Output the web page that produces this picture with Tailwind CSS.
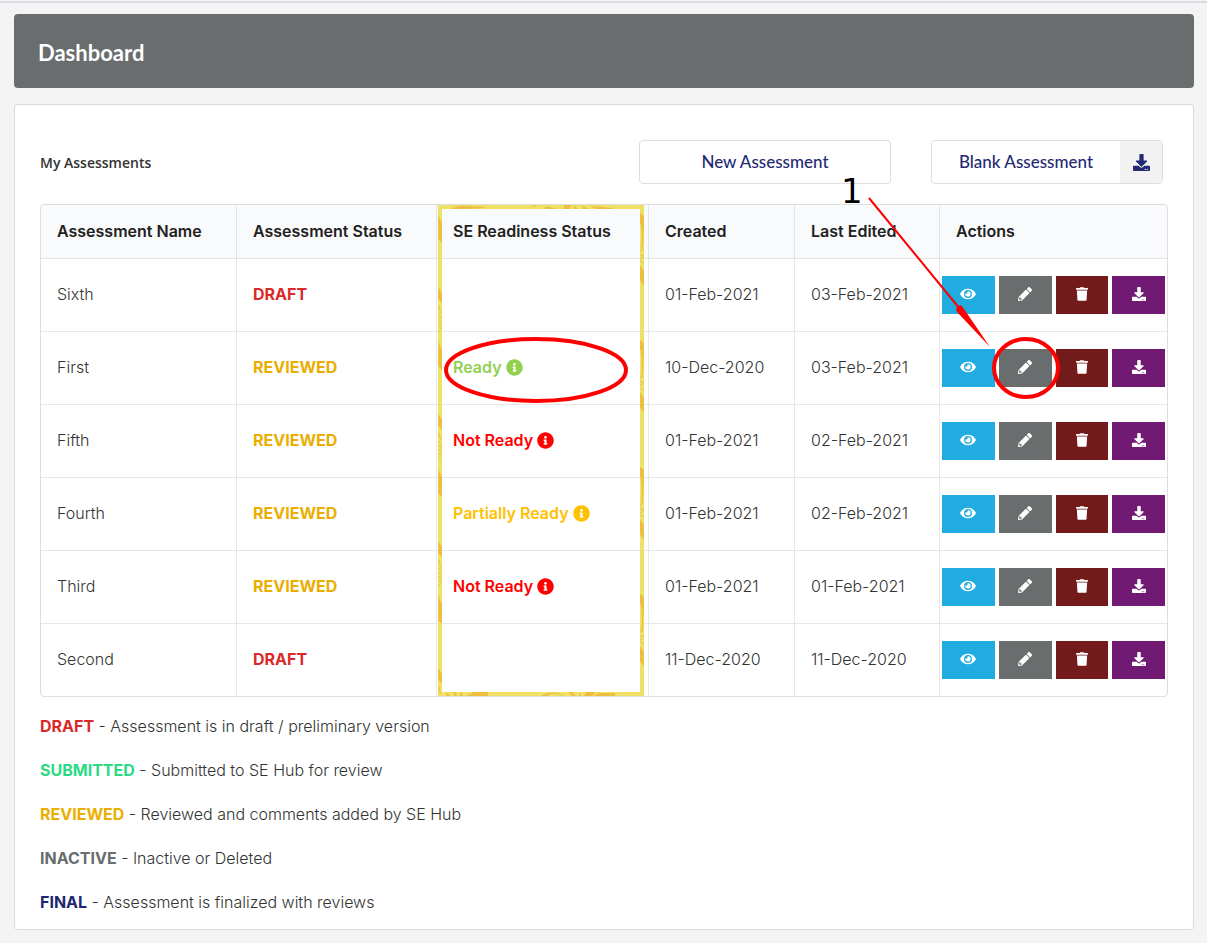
<!DOCTYPE html>
<html lang="en">
<head>
<meta charset="utf-8">
<meta name="viewport" content="width=device-width, initial-scale=1">
<title>Dashboard</title>
<script src="https://cdn.jsdelivr.net/npm/@tailwindcss/browser@4"></script>
</head>
<body class="relative bg-[#f4f4f4] font-['Inter',sans-serif] text-base text-[#333]">

<!-- Icon definitions -->
<svg class="hidden" aria-hidden="true">
  <symbol id="eye" viewBox="0 0 576 512"><path d="M572.52 241.4C518.29 135.59 410.93 64 288 64S57.68 135.64 3.48 241.41a32.35 32.35 0 0 0 0 29.19C57.71 376.41 165.07 448 288 448s230.32-71.64 284.52-177.41a32.35 32.35 0 0 0 0-29.19zM288 400a144 144 0 1 1 144-144 143.93 143.93 0 0 1-144 144zm0-240a95.31 95.31 0 0 0-25.31 3.79 47.85 47.85 0 0 1-66.9 66.9A95.78 95.78 0 1 0 288 160z"/></symbol>
  <symbol id="pencil" viewBox="0 0 512 512"><path d="M497.9 142.1l-46.1 46.1c-4.7 4.7-12.3 4.7-17 0l-111-111c-4.7-4.7-4.7-12.3 0-17l46.1-46.1c18.7-18.7 49.1-18.7 67.9 0l60.1 60.1c18.8 18.7 18.8 49.1 0 67.9zM284.2 99.8L21.6 362.4.4 483.9c-2.9 16.4 11.4 30.6 27.8 27.8l121.5-21.3 262.6-262.6c4.7-4.7 4.7-12.3 0-17l-111-111c-4.8-4.7-12.4-4.7-17.1 0zM88 424h48v36.3l-64.5 11.3-31.1-31.1L51.7 376H88v48z"/></symbol>
  <symbol id="trash" viewBox="0 0 448 512"><path d="M432 32H312l-9.4-18.7A24 24 0 0 0 281.1 0H166.8a23.72 23.72 0 0 0-21.4 13.3L136 32H16A16 16 0 0 0 0 48v32a16 16 0 0 0 16 16h416a16 16 0 0 0 16-16V48a16 16 0 0 0-16-16zM53.2 467a48 48 0 0 0 47.9 45h245.8a48 48 0 0 0 47.9-45L416 128H32z"/></symbol>
  <symbol id="download" viewBox="0 0 512 512"><path d="M216 0h80c13.3 0 24 10.7 24 24v168h87.7c17.8 0 26.7 21.5 14.1 34.1L269.7 378.3c-7.5 7.5-19.8 7.5-27.3 0L90.1 226.1c-12.6-12.6-3.7-34.1 14.1-34.1H192V24c0-13.3 10.7-24 24-24zm296 376v112c0 13.3-10.7 24-24 24H24c-13.3 0-24-10.7-24-24V376c0-13.3 10.7-24 24-24h146.7l49 49c20.1 20.1 52.5 20.1 72.6 0l49-49H488c13.3 0 24 10.7 24 24zm-124 88c0-11-9-20-20-20s-20 9-20 20 9 20 20 20 20-9 20-20zm64 0c0-11-9-20-20-20s-20 9-20 20 9 20 20 20 20-9 20-20z"/></symbol>
  <symbol id="info" viewBox="0 0 512 512"><path d="M256 8C119.043 8 8 119.083 8 256c0 136.997 111.043 248 248 248s248-111.003 248-248C504 119.083 392.957 8 256 8zm0 110c23.196 0 42 18.804 42 42s-18.804 42-42 42-42-18.804-42-42 18.804-42 42-42zm56 254c0 6.627-5.373 12-12 12h-88c-6.627 0-12-5.373-12-12v-24c0-6.627 5.373-12 12-12h12v-64h-12c-6.627 0-12-5.373-12-12v-24c0-6.627 5.373-12 12-12h64c6.627 0 12 5.373 12 12v100h12c6.627 0 12 5.373 12 12v24z"/></symbol>
</svg>

<div class="h-[3px] border-b-2 border-[#d8dbe2]"></div>
<div class="px-[14px] pt-[11px] pb-[13px] pr-[13px]">
  <header class="rounded bg-[#696d6d] px-6 pt-6 pb-5">
    <h1 class="font-['Lato',sans-serif] text-[22px] leading-[30px] font-bold text-white">Dashboard</h1>
  </header>

  <main class="mt-4 rounded border border-[#d8dbe2] bg-white px-[25px] pt-[35px] pb-[15px]">
    <div class="flex items-center gap-10 pr-[5px] font-['Lato',sans-serif] text-[17px] font-medium text-[#232a73]">
      <h2 class="mr-auto pt-0.5 font-['Open_Sans',sans-serif] text-sm font-semibold text-[#333]">My Assessments</h2>
      <button type="button" class="h-11 w-[252px] rounded border border-[#dedede]">New Assessment</button>
      <button type="button" class="flex h-11 w-[232px] items-stretch overflow-hidden rounded border border-[#dedede]">
        <span class="flex grow items-center justify-center">Blank Assessment</span>
        <span class="flex w-[42px] items-center justify-center bg-[#f2f2f2]"><svg class="size-[17px] fill-current"><use href="#download"/></svg></span>
      </button>
    </div>

    <div class="mt-5 overflow-hidden rounded border border-[#dedede]">
      <table class="w-full table-fixed border-separate border-spacing-0 text-left">
        <colgroup><col class="w-[196px]"><col class="w-[200px]"><col class="w-[212px]"><col class="w-[146px]"><col class="w-[145px]"><col></colgroup>
        <thead class="bg-[#f9fafb] text-[#212121]">
          <tr class="h-[54px] *:border-b *:border-[#e2e3e5] *:px-4 *:pb-0.5 *:font-semibold">
            <th class="border-r">Assessment Name</th><th class="border-r">Assessment Status</th><th class="border-r">SE Readiness Status</th><th class="border-r">Created</th><th class="border-r">Last Edited</th><th>Actions</th>
          </tr>
        </thead>
        <tbody id="rows" class="font-light"></tbody>
      </table>
    </div>

    <div class="mt-[17px] flex flex-col gap-5 font-light">
      <p><b class="font-bold text-[#db2828]">DRAFT</b> - Assessment is in draft / preliminary version</p>
      <p><b class="font-bold text-[#2bdb84]">SUBMITTED</b> - Submitted to SE Hub for review</p>
      <p><b class="font-bold text-[#eaae00]">REVIEWED</b> - Reviewed and comments added by SE Hub</p>
      <p><b class="font-bold text-[#696d6d]">INACTIVE</b> - Inactive or Deleted</p>
      <p><b class="font-bold text-[#1d2672]">FINAL</b> - Assessment is finalized with reviews</p>
    </div>
  </main>
</div>

<!-- Callouts drawn over the table -->
<svg class="pointer-events-none absolute top-0 left-0 h-[943px] w-[1207px]" viewBox="0 0 1207 943" fill="none">
  <defs>
    <pattern id="left" x="438" y="287" width="4" height="127" patternUnits="userSpaceOnUse">
      <rect width="4" height="127" fill="#efe066"/>
      <path d="M0 0 4 6V16L0 12ZM0 55 4 63V83L0 79ZM0 18Q2 20 3 26L2 26Q1 21 0 20Z" fill="#eebe3f"/>
      <path d="M0 27 4 31M0 31 4 34M0 36H4M0 40 4 38M0 45 4 41" stroke="#e9c548"/>
      <path d="M0 55H1V80H0" fill="#f0c544"/>
    </pattern>
    <pattern id="right" x="640" y="213" width="4" height="127" patternUnits="userSpaceOnUse">
      <rect width="4" height="127" fill="#efe066"/>
      <path d="M0 0 4 3V31Q4 12 0 10ZM0 52 4 58V73L0 67ZM2 12Q5 24 2 38H1Q3 24 1 12Z" fill="#eebe3f"/>
      <path d="M0 38 4 36M0 42H4M0 46 4 43M0 48 4 50" stroke="#e9c548"/>
    </pattern>
  </defs>
  <path d="M438 205H644V209H438ZM438 692H644V696H438Z" fill="#efe066"/>
  <g fill="#eebe3f">
    <path d="M452 209Q458 205 466 206L485 207V208L466 209ZM530 206 538 205 534 207ZM545 207Q550 206 556 209H545ZM563 209 565 205H572L569 209ZM574 209V205L578 209ZM582 205 588 209H583ZM590 206 613 208V209H596Z"/>
    <path d="M446 692 450 696H447ZM453 692 455 696H457L455 692ZM462 692 459 696H463ZM466 696 474 692H488V696ZM541 696Q552 689 565 696L560 695Q552 692 547 696ZM568 692 572 696H576L572 692ZM579 692V696H581ZM586 692 584 696H592L596 692ZM598 693H615V696H594Z"/>
  </g>
  <path d="M438 205H442V696H438Z" fill="url(#left)"/>
  <path d="M640 205H644V696H640Z" fill="url(#right)"/>
  <g stroke="#f00">
    <ellipse cx="536" cy="370" rx="90" ry="31" stroke-width="4"/>
    <ellipse cx="1026" cy="368" rx="32" ry="29" stroke-width="4"/>
    <path d="M869 198 960 309" stroke-width="2"/>
  </g>
  <path d="M956 310 957 307 961 305 964 309 990 347 958 313Z" fill="#f00"/>
  <text x="841" y="203" fill="#000" font-size="34" class="font-['DejaVu_Sans',sans-serif]">1</text>
</svg>

<script>
const statusClass = { DRAFT: 'text-[#db2828]', REVIEWED: 'text-[#eaae00]' };
const readyClass = { 'Ready': 'text-[#92d050]', 'Not Ready': 'text-[#ff0000]', 'Partially Ready': 'text-[#ffc000]' };
const actions = [
  ['View', 'eye', 'bg-[#20abe1]', 'w-4'],
  ['Edit', 'pencil', 'bg-[#696d6d]', 'w-3.5'],
  ['Delete', 'trash', 'bg-[#731a1a]', 'w-3'],
  ['Download', 'download', 'bg-[#701a73]', 'w-3.5'],
];
const rows = [
  ['Sixth', 'DRAFT', '', '01-Feb-2021', '03-Feb-2021'],
  ['First', 'REVIEWED', 'Ready', '10-Dec-2020', '03-Feb-2021'],
  ['Fifth', 'REVIEWED', 'Not Ready', '01-Feb-2021', '02-Feb-2021'],
  ['Fourth', 'REVIEWED', 'Partially Ready', '01-Feb-2021', '02-Feb-2021'],
  ['Third', 'REVIEWED', 'Not Ready', '01-Feb-2021', '01-Feb-2021'],
  ['Second', 'DRAFT', '', '11-Dec-2020', '11-Dec-2020'],
];
const cell = 'border-r border-b border-[#e6e7e8] px-4 pb-0.5 group-last:border-b-0';
document.getElementById('rows').innerHTML = rows.map(([name, status, ready, created, edited]) => `
  <tr class="group h-[73px] last:h-[72px]">
    <td class="${cell}">${name}</td>
    <td class="${cell}"><span class="font-bold ${statusClass[status]}">${status}</span></td>
    <td class="${cell}">${ready && `<span class="flex items-center gap-1 font-semibold ${readyClass[ready]}">${ready}<svg class="size-[17px] fill-current"><use href="#info"/></svg></span>`}</td>
    <td class="${cell}">${created}</td>
    <td class="${cell}">${edited}</td>
    <td class="border-b border-[#e6e7e8] px-0.5 group-last:border-b-0"><div class="flex gap-1">
      ${actions.map(([label, icon, bg, w]) => `<button type="button" aria-label="${label} ${name}" class="flex h-[38px] flex-1 items-center justify-center pb-0.5 ${bg}"><svg class="h-3.5 ${w} fill-white"><use href="#${icon}"/></svg></button>`).join('')}
    </div></td>
  </tr>`).join('');
</script>
</body>
</html>
